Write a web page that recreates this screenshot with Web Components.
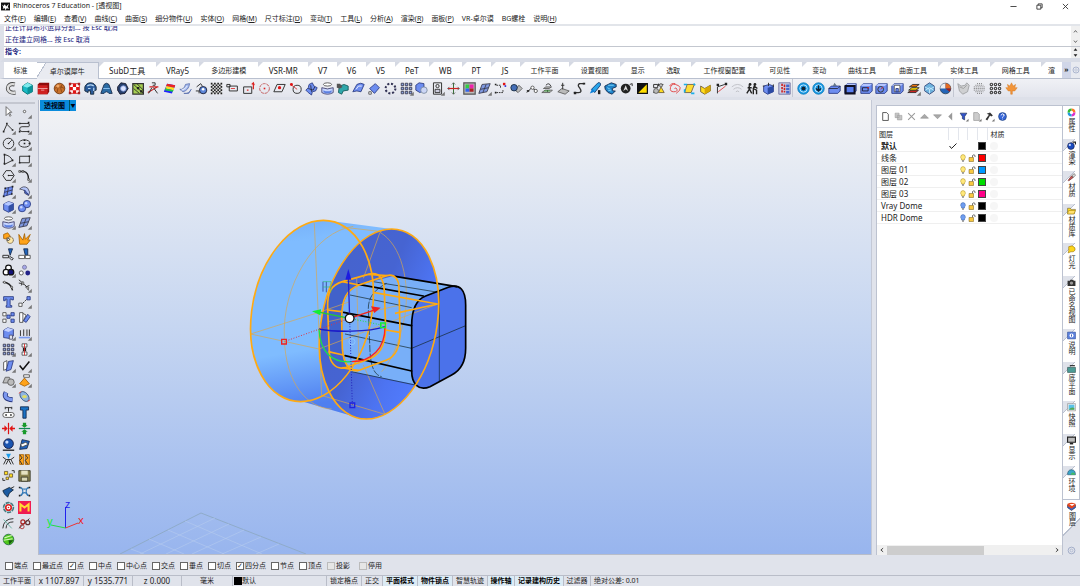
<!DOCTYPE html>
<html lang="zh-CN">
<head>
<meta charset="utf-8">
<title>Rhinoceros 7 Education - [透视图]</title>
<style>
  html, body {
    margin: 0;
    height: 100%;
  }
  body {
    font: 7px/12px "Noto Sans", "Noto Sans CJK SC", sans-serif;
    color: #222;
    background: #e0e3eb;
    overflow: hidden;
  }
</style>
</head>
<body>
<rhino-app>
  <title-bar slot="top">Rhinoceros 7 Education - [透视图]</title-bar>
  <menu-bar slot="top"></menu-bar>
  <command-area slot="top"></command-area>
  <tab-strip slot="top"></tab-strip>
  <icon-toolbar slot="top"></icon-toolbar>
  <side-tools slot="left"></side-tools>
  <view-port slot="view">透视图</view-port>
  <layer-panel slot="right"></layer-panel>
  <panel-tabs slot="right"></panel-tabs>
  <osnap-bar slot="bottom"></osnap-bar>
  <status-bar slot="bottom"></status-bar>
</rhino-app>

<script>
// icons are drawn in a 16x16 box
const gear = '<circle cx="8" cy="8" r="7" fill="#1a9be6" stroke="#0575b5"/><circle cx="8" cy="8" r="4.500" fill="none" stroke="#dff3ff"/>';
const slab = '<path class="b" d="M1 5l3-3h11v9l-3 3H1z"/><path d="M1 5l3-3h11l-3 3z" fill="#b4c5ff"/>';
const ICONS = {
  pipe: '<path d="M12 3C1 0 0 15 13 13" fill="none" stroke="#444" stroke-width="5"/><path d="M12 3C1 0 0 15 13 13" fill="none" stroke="#ddd" stroke-width="3"/>',
  gem: '<path class="c" d="M2 5l6-4 6 3v8l-6 3-6-4z"/><path d="M2 5l6 2 6-3-6-3z" fill="#7fe9ec"/><path d="M8 7l6-3v8l-6 3z" fill="#0a9298"/>',
  redbox: '<path d="M1 3l2-2h12v11l-2 3H1z" fill="#8f0c0c"/><path d="M1 4h12v11H1z" fill="#cf2020"/><path d="M1 8h12M5 10h4" stroke="#f6b0b0"/>',
  ball: '<circle cx="8" cy="8" r="6.500" fill="#c8702a" stroke="#6b3108"/><path d="M2 8q6-4 12 0M5 3q2 5 0 10M11 3q-3 5 0 10" fill="none" stroke="#8a4614"/><circle cx="6" cy="5" r="2" fill="#f0a868"/>',
  redgrid: '<path d="M2 2h12v12H2z" fill="#fff" stroke="#c22"/><path d="M6 2h4v4H6zM2 6h4v4H2zM10 6h4v4h-4zM6 10h4v4H6z" class="r"/><path d="M1 1h3v3H1zM12 1h3v3h-3zM1 12h3v3H1zM12 12h3v3h-3z" fill="#a22"/>',
  bluedome: '<path d="M1 6q2-5 7-5t7 5v4l-3 1v4H8v-4H5v2l-4-2z" fill="#2a5a9a" stroke="#123"/><path d="M4 5q4-3 8 0M5 8h3M12 7v4" fill="none" stroke="#b9d9f5" stroke-width="1.500"/>',
  arch: '<path d="M5 3q3-3 6 0l4 11h-4q-3-4-6 0H1z" fill="#2a6ba4" stroke="#124"/><path d="M4 8h8" stroke="#9cf"/>',
  nut: '<path d="M2 6l4-5 6 1 3 6-4 6-6 1-3-5z" fill="#27406e" stroke="#112"/><circle cx="9" cy="8" r="3.400" fill="#dde4ff" stroke="#7a96d8"/>',
  greengrid: '<path d="M1 2h13v13H1z" fill="#a6cf52" stroke="#333" stroke-width="1.500"/><path d="M2 3l12 11M6 2l8 8M2 8l7 6" stroke="#222"/><path class="k" d="M6 6h3v3H6zM10 10h3v3h-3z"/>',
  cut: '<path d="M1 13L13 6M3 6h11" stroke="#c22" stroke-width="1.300"/><path class="l" d="M8 7l5 7M6 7l-4 7M6 1h4v3H7"/>',
  rainbow: '<path d="M5 2l10 2-4 10L1 12z" fill="#22f"/><path d="M4 5l10 2 1-3-10-2z" fill="#e22"/><path d="M3 8l10 2 1-3-10-2z" fill="#fd2"/><path d="M2 10l10 2 1-2-10-2z" fill="#2c4"/>',
  waves: '<path d="M1 9q5 1 7-6l5-1q-1 8-8 10zM6 14q6 1 9-5l-3 5z" fill="#a9bdf0" stroke="#5a6fae"/><path d="M3 10q5-1 7-5" stroke="#fff" fill="none"/>',
  gearball: '<circle cx="10" cy="10" r="4.500" fill="#5d86d8" stroke="#112"/><path class="l" d="M2 6l5-4 2 3M1 11h4v3"/><circle cx="10" cy="9" r="1.600" fill="#fff"/>',
  checker: '<path d="M1 1h14v14H1z" fill="#ddd"/><path d="M2 1v14M6 1v14M10 1v14M14 1v14" stroke="#222" stroke-width="2" stroke-dasharray="2 2"/><path d="M4 3v12M8 3v12M12 3v12" stroke="#222" stroke-width="2" stroke-dasharray="2 2"/>',
  rectline: '<path class="l" d="M4 5h10v6H4zM1 3h4v3H1z"/><path d="M6 8h5" stroke="#d22"/>',
  rectup: '<path class="l" d="M2 6h10v8H2z"/><path d="M14 9V1M12 3l2-2 1 3M6 10h2" stroke="#d22" fill="none" stroke-width="1.500"/>',
  circdash: '<circle cx="8" cy="8" r="6" fill="none" stroke="#b44" stroke-dasharray="4 1"/><path d="M7 8h2" stroke="#d22" stroke-width="2"/>',
  rhombus: '<path class="l" d="M5 3h10l-4 9H1z"/><circle cx="8" cy="7" r="2" class="r"/>',
  circpt: '<circle class="l" cx="10" cy="9" r="5"/><path d="M2 3l8 6" stroke="#d22"/><circle cx="3" cy="3" r="1.800" class="r"/>',
  cross: '<path class="b" d="M5 3l4-2 2 4 4 2-2 4-4 1-1 4-4-3-3-3 3-3z"/><path d="M4 8l6 2 2-4M7 4l1 8" fill="none" stroke="#223"/>',
  rings: '<ellipse class="w" cx="8" cy="3" rx="5" ry="2"/><path d="M1 7q7 3 14 0v6q-7 4-14 0z" fill="#c7d6ff" stroke="#336"/><path d="M3 10q5 3 10 0v3q-5 2-10 0z" fill="#5c7fe0"/>',
  teal: '<path d="M4 5l6-2 5 2v5l-6 1-2 4-4-2z" fill="#2fa7ab" stroke="#155"/><path d="M1 2h4l3 4-3 2-4-1z" fill="#555"/>',
  sheet: '<path class="b" d="M1 12L6 3q5-3 9 0l-4 9q-5-2-10 0z"/><path d="M5 9l3-4h4" fill="none" stroke="#fff"/>',
  diamond: '<path class="b" d="M2 8l7-6 5 5-6 7z"/><path class="w" d="M1 12h3v3H1z"/>',
  dotring: '<circle cx="8" cy="8" r="6" fill="none" stroke="#335" stroke-width="2.500" stroke-dasharray="2.500 2.200"/>',
  array: '<path d="M1.500 1.500h3v3h-3zM6.500 1.500h3v3h-3zM11.500 1.500h3v3h-3zM1.500 6.500h3v3h-3zM6.500 6.500h3v3h-3zM11.500 6.500h3v3h-3zM1.500 11.500h3v3h-3zM6.500 11.500h3v3h-3zM11.500 11.500h3v3h-3z" fill="#8ea6e6" stroke="#334"/>',
  bool: '<path d="M1 4l4-3 6 1v8l-5 3-5-3z" class="b"/><circle cx="11" cy="10" r="4" fill="#ccd6f6" stroke="#789"/>',
  frame: '<path class="l" d="M3 1h10v14H3z"/><circle class="l" cx="8" cy="5" r="2"/><path d="M5 9h6v4H5z" fill="#ccd" stroke="#222"/>',
  axis: '<path d="M8 1v14" stroke="#151"/><path d="M1 8h14" stroke="#c22" stroke-width="1.500"/><path d="M6 3l2-2 2 2M6 13l2 2 2-2M3 6L1 8l2 2M13 6l2 2-2 2" fill="none" stroke="#555"/>',
  color: '<path d="M1 1h14v14H1z" fill="#bbb" stroke="#555" stroke-width="1.500"/><path d="M3 3h5v5H3z" fill="#3c4"/><path d="M8 3h5v5H8z" fill="#e2a"/><path d="M3 8h5v4H3z" fill="#36e"/><path d="M8 8h5v4H8z" fill="#a22"/>',
  tiles: '<path d="M5 3l10-1-4 10-10 2z" fill="#7f98e0" stroke="#334"/><path d="M3 9l10-2M10 3L6 13" stroke="#334"/>',
  ptsring: '<path class="l" stroke-dasharray="2 1" d="M3 4h5v3M3 13h8V9"/><path class="r" d="M11 1h3v3h-3z"/><path d="M13 4h2v2h-2z" fill="#22d"/><path class="k" d="M1 2h2v2H1zM1 12h2v2H1z"/>',
  twoballs: '<path class="g" d="M6 10l5-6 4 4-5 5z"/><circle cx="5" cy="7" r="4" fill="#456fb8" stroke="#123"/>',
  nodes: '<path class="l" d="M1 13l6-6 6 4"/><path class="k" d="M1 10h3v2H1z"/><circle class="w" cx="8" cy="7" r="2"/><circle class="w" cx="12" cy="11" r="2"/>',
  stack: '<path class="g" d="M1 13l4-3h9l-3 3zM3 8l3-2h7l-3 2z"/><path class="l" d="M6 4q4-4 6 1M8 10v2"/><path d="M4 11h7" stroke="#3a3"/>',
  pin: '<path class="g" d="M1 12l5-4 9 3-5 4z"/><path class="l" d="M7 1v8M5 4h4"/>',
  scurve: '<path d="M14 2H8q-3 2 0 5 4 6-1 6H1" fill="none" stroke="#333" stroke-width="1.600"/><path d="M1 12h3v3H1zM12 1h3v2h-3z" class="k"/>',
  brush: '<path d="M3 9l8-8q4-1 3 3l-7 9z" fill="#28a4ea" stroke="#136"/><path d="M1 14l3-6 3 4z" fill="#0d7fd8"/><path d="M11 10h3v5h-3z" class="k"/>',
  dragon: '<path d="M1 5l8-4 6 2v3l-5 2 1 3h3l-4 4-5-2q-5-4-4-8z" fill="#1f83c9" stroke="#124"/><path d="M4 7l4 2M5 10l4 1M5 4l7 0" stroke="#8df"/>',
  ringk: '<circle cx="7" cy="8" r="6" fill="#222"/><path d="M4 11l3-7 3 7-3-2z" fill="#ddd"/><path d="M12 3l3-1v3" class="l"/>',
  invert: '<path d="M2 2h12v12H2z" fill="#fd0" stroke="#111" stroke-width="1.500"/><path d="M2 14V2h12z" fill="#111"/>',
  mess: '<path class="l" d="M2 3h5v4H2zM9 3h5M4 9l-2 4h5M8 2v3"/><path class="y" d="M11 6l4 7H8z"/><circle class="g" cx="5" cy="11" r="3"/><circle class="g" cx="11" cy="4" r="2"/>',
  spiral: '<path class="rl" d="M8 8q2-2 3 1t-4 3-4-5 6-4 6 4-5 7"/><path class="rl" d="M2 5q2-4 7-3"/>',
  yellow: '<path d="M5 3h9l-4 10H2z" fill="#fd3" stroke="#654"/><path d="M1 3h4M14 14h-4M13 2l2 2M2 9v4" stroke="#18aee8" stroke-width="2"/>',
  ybox: '<path class="y" d="M2 5l5 3 7-4v7l-7 4-5-3z"/><path d="M7 8l7-4v7l-7 4z" fill="#d9a800"/>',
  bend: '<path class="l" d="M3 14V6l9-3"/><path class="rl" d="M4 12l9-7"/><path class="k" d="M2 2h3v3H2zM12 1h3v3h-3z"/>',
  wifi: '<path d="M1 6q7-6 14 0M3 9q5-4 10 0M6 12q2-2 4 0" fill="none" stroke="#b7b9bf"/>',
  people: '<path d="M4 4v5l-3 5M4 8l3 6M2 7h5M11 3l-2 5 4 2v5M10 5l4 3M9 9v6" fill="none" stroke="#222" stroke-width="1.700"/><circle cx="5" cy="3" r="1.700" class="k"/><circle cx="11" cy="3" r="1.700" class="k"/>',
  cube: '<path class="b" d="M2 5l7-2 5 2v7l-7 3-5-3z"/><path d="M7 7l7-2v7l-7 3z" fill="#2b4aa5"/><path d="M8 1v4M1 5h2M14 3v3" class="l"/>',
  circuit: '<path d="M1 1h14v14H1z" fill="#ccd2e8" stroke="#669"/><path d="M5 2v12M8 3v10" stroke="#c22" stroke-width="2" stroke-dasharray="3 1"/><path d="M10 3h4v3h-4zM10 7h4v3h-4zM10 11h4v3h-4z" fill="#46c"/>',
  gear1: gear + '<circle cx="8" cy="8" r="2.500" fill="#123"/>',
  gear2: gear + '<path d="M8 4v6M5 8l3 3 3-3" stroke="#123" fill="none" stroke-width="1.700"/>',
  tray: '<path class="b" d="M1 8l3-3h11v6l-3 3H1z"/><path d="M1 8h11l3-3" fill="none" stroke="#223"/><path d="M8 1l3 4H6z" fill="#678"/>',
  slab1: slab + '<path d="M2 5h11v9H2z" fill="#5a7ff0" stroke="#112" stroke-width="2.500"/>',
  slab2: slab + '<path d="M3 11V7h7v4z" fill="none" stroke="#112"/><circle cx="10" cy="7" r="1" class="r"/>',
  slab3: slab + '<circle class="l" cx="7" cy="9" r="3.500"/><path class="rl" d="M7 9l3-3"/>',
  slab4: slab + '<path class="w" d="M4 4h7v8H4z"/><path class="b" d="M6 8h3v4H6z"/>',
  layers: '<path d="M1 13l4-3h9l-3 3z" fill="#c22" stroke="#222"/><path d="M2 10l4-3h9l-4 3z" fill="#fd0" stroke="#222"/><path d="M3 6l4-3h8l-4 3z" fill="#e71" stroke="#222"/>',
  hexa: '<path d="M8 1l6 4v6l-6 4-6-4V5z" fill="#6eb2dd" stroke="#347"/><path d="M2 6l6 3 6-3M8 9v5M3 10l5-3 5 3" fill="none" stroke="#cef"/>',
  sphere4: '<circle cx="8" cy="8" r="6.500" fill="#2465b8" stroke="#345"/><path d="M8 8V1.500A6.500 6.500 0 0 0 1.500 8z" fill="#eee"/><path d="M8 8h6.500A6.500 6.500 0 0 0 8 1.500z" fill="#e66a20"/><path d="M8 8l5 4a6.500 6.500 0 0 0 1.500-4z" fill="#922"/>',
  ghost: '<path d="M1 2l4 3 5-1 2-3 3 3-2 8-6 3-4-4z" fill="#cfd0d2" stroke="#9a9b9e"/><path d="M3 6l5 2 4-4" stroke="#999" fill="none"/>',
  halftone: '<g fill="none" stroke="#777" stroke-width="1.200" stroke-dasharray="1.200 1.200"><path d="M5 2h6M3 4h10M1 6h14M1 8h14M1 10h14M3 12h10M5 14h6"/></g>',
  ringgrid: '<g fill="none" stroke="#444" stroke-width="1.400"><circle cx="3" cy="3" r="1.500"/><circle cx="8" cy="3" r="1.500"/><circle cx="13" cy="3" r="1.500"/><circle cx="3" cy="8" r="1.500"/><circle cx="8" cy="8" r="1.500"/><circle cx="13" cy="8" r="1.500"/><circle cx="3" cy="13" r="1.500"/><circle cx="8" cy="13" r="1.500"/><circle cx="13" cy="13" r="1.500"/></g>',
  leaf: '<path d="M8 1l2 4 3-2-1 4 3 0-3 4-3 0v4H7v-4l-3 0-3-4h3L3 3l3 2z" fill="#f2953a" stroke="#d57a22" stroke-width=".6"/>',

  arrow: '<path d="M5 2v11l3-3 2 4 1-1-2-4h3z" fill="#fff" stroke="#555"/>',
  point: '<circle cx="8" cy="8" r="1.500" class="w"/>',
  polyline: '<path class="l" d="M2 13l4-9 7 7"/><path class="k" d="M5 2h2v2H5zM1 12h2v2H1zM12 10h2v2h-2z"/>',
  curvebox: '<path class="l" d="M2 3h9q3-1 3 2t-3 2H5q-3 0-3 3t3 3h8"/><path class="k" d="M1 2h2v2H1zM12 1h2v2h-2zM1 12h2v2H1zM12 12h2v2h-2z"/>',
  circle: '<circle class="l" cx="8" cy="8" r="6.500"/><path class="l" d="M8 8l4-4"/><circle cx="8" cy="8" r="1" class="k"/>',
  ellipse: '<ellipse class="l" cx="8" cy="8" rx="7" ry="4.500"/><path class="k" d="M7 7h2v2H7zM13 7h2v2h-2zM7 3h2v2H7z"/>',
  arc: '<path class="l" d="M3 14V2q7 1 10 7z"/><path class="k" d="M2 1h2v2H2zM2 12h2v2H2zM12 8h2v2h-2z"/>',
  rect: '<path class="l" d="M2 4h12v8H2z"/><path class="k" d="M1 11h2v2H1zM13 3h2v2h-2z"/>',
  polygon: '<path class="l" d="M5 2h6l4 6-4 6H5L1 8z"/><path class="l" d="M8 8h6"/><circle cx="8" cy="8" r="1" class="k"/>',
  fillet: '<path d="M2 3h5q6 1 6 10" fill="none" stroke="#222" stroke-width="1.700"/><path class="w" d="M1 2h2v2H1zM5 2h2v2H5zM12 12h2v2h-2z"/>',
  surf: '<path class="b" d="M4 4l9-2-1 9-10 3z"/><path d="M3 9l10-3M8 3L6 13" stroke="#334"/><path class="k" d="M3 3h2v2H3zM12 1h2v2h-2zM1 13h2v2H1zM11 10h2v2h-2z"/>',
  fan: '<path d="M2 5q5-5 10-1 4 5 1 9l-5-3q2-4-6-5z" fill="#b6c7fa" stroke="#445"/><path class="b" d="M8 6l5 6-4-2z"/>',
  box: '<path class="b" d="M2 5l6-3 6 2v8l-6 3-6-3z"/><path d="M8 7l6-3v8l-6 3z" fill="#3350a5"/><path d="M2 5l6-3 6 2-6 3z" fill="#b5c8ff"/>',
  balls: '<circle class="b" cx="5" cy="10" r="4.500"/><circle class="b" cx="11" cy="5" r="4.500"/><circle cx="10" cy="4" r="1.500" fill="#c9d6ff"/><circle cx="4" cy="9" r="1.500" fill="#c9d6ff"/>',
  gearO: '<path class="o" d="M2 3l5-2 3 4-2 4-6-1z"/><circle cx="10" cy="10" r="4" fill="#ffe9a8" stroke="#543" stroke-dasharray="2 .6"/><path class="w" d="M6 7l4 2-3 2z"/>',
  burst: '<path class="o" d="M2 15L1 3l5 7 2-8 1 7 6-6-3 7 3 0-4 5z"/>',
  trim: '<path d="M8 1l2 8 3-8z" fill="#26b" stroke="#124"/><path class="l" d="M1 9h7v3H1zM9 10l5 3-2 2-4-4"/>',
  split: '<path d="M7 1h5v8H9z" fill="#26b" stroke="#124"/><path class="w" d="M1 9h7v4H1zM9 9h6v4H9z"/>',
  group: '<circle cx="8" cy="5" r="3.500" fill="#fff" stroke="#111" stroke-width="1.500"/><circle cx="5" cy="10" r="3.500" fill="#fff" stroke="#111" stroke-width="1.500"/><circle cx="11" cy="10" r="3.500" fill="#117" stroke="#111" stroke-width="1.500"/>',
  ungroup: '<circle cx="8" cy="4" r="2.500" fill="#a5a7e8" stroke="#779"/><circle class="w" cx="4" cy="11" r="2.500"/><circle cx="12" cy="11" r="3" fill="#228"/>',
  handle: '<path d="M1 4q10 0 12 10" fill="none" stroke="#222" stroke-width="1.700"/><circle class="w" cx="3" cy="4" r="1.200"/><circle class="w" cx="12" cy="10" r="1.200"/>',
  handle2: '<path class="l" d="M1 1l5 4M1 5q9 0 12 9M6 3l-2 5M9 10l5-2"/><circle class="w" cx="6" cy="5" r="1.300"/><circle class="w" cx="12" cy="11" r="1.300"/>',
  text: '<path class="b" d="M2 2h12v4h-2V5h-2v8h2v2H5v-2h1V5H4v2H2z"/>',
  move: '<path class="l" stroke-dasharray="2 1" d="M4 12l8-8"/><path class="w" d="M1 10h4v4H1z"/><path class="b" d="M11 2h4v4h-4z"/>',
  copies: '<path class="b" d="M6 5h4v4H6zM11 2h4v4h-4zM11 10h4v4h-4z"/><path class="w" d="M1 2h4v4H1zM1 10h4v4H1z"/>',
  skew: '<path class="w" d="M2 2h4v12H2zM6 3l4 2-4 8"/><path class="b" d="M12 4l3 3-5 7-3-2z"/>',
  capbox: '<path class="b" d="M2 4l5-3 7 2v8l-5 3-7-1z"/><path d="M2 4l5-3 7 2-6 3z" fill="#c3d0ff"/><path d="M9 10h4v5H9z" fill="#e0e3eb" stroke="#446"/>',
  plow: '<path class="l" d="M3 11V4M7 11V3M11 11V3M14 11V3"/><path d="M1 13h14" stroke="#7a9bf0" stroke-width="2"/>',
  align: '<path class="w" d="M5 1h6v4H5zM5 11h6v4H5z"/><path class="k" d="M6 6h4v4H6z"/><path d="M8 1v14" stroke="#d22"/>',
  flag: '<path class="w" d="M2 4l4-2v10l-4 2z"/><path class="b" d="M8 3l6-1-3 11-6 2z"/>',
  check: '<path d="M2 8l4 5 8-10" fill="none" stroke="#111" stroke-width="1.800"/>',
  solids: '<path class="g" d="M1 11l3-7h5l3 7z"/><circle class="g" cx="11" cy="10" r="4"/>',
  orangepyr: '<path class="o" d="M2 12l6-7 6 7-6 3z"/><path class="w" d="M7 1h7v3H7z"/>',
  elbow: '<path d="M5 3q-4 8 8 9" fill="none" stroke="#25357c" stroke-width="6"/><path d="M5 3q-4 8 8 9" fill="none" stroke="#7c98ee" stroke-width="4"/>',
  eye: '<ellipse cx="8" cy="8" rx="7" ry="4.500" transform="rotate(50 8 8)" fill="#8fb4e0" stroke="#357"/><ellipse cx="8" cy="8" rx="3" ry="2" fill="#dd6"/><path class="rl" d="M1 4l3-2M12 14l3-2"/>',
  belt: '<path class="l" d="M4 2h8M8 2v5M4 1v3M12 1v3"/><rect class="w" x="1" y="8" width="14" height="6" rx="3"/><path class="k" d="M4 10h2v2H4zM10 10h2v2h-2z"/>',
  bolt: '<path d="M3 1h10v4h-3v10H6V5H3z" fill="#1b72c4" stroke="#124"/>',
  inward: '<path d="M8 1v14" stroke="#d11" stroke-width="1.500"/><path class="r" d="M0 7h3V4l4 4-4 4V9H0zM16 7h-3V4L9 8l4 4V9h3z"/>',
  inwardv: '<path d="M1 8h14" stroke="#185" stroke-width="1.500"/><path d="M6 1v3H4l4 3 4-3h-2V1zM6 15v-3H4l4-3 4 3h-2v3z" fill="#1a9a2c"/>',
  render: '<circle cx="8" cy="7" r="6" fill="#1b55b0" stroke="#113"/><circle cx="6" cy="5" r="2" fill="#cdf"/><path d="M1 15h14" stroke="#111" stroke-width="1.500"/>',
  fold: '<path d="M5 2l9 2-3 9-9 1z" fill="#1f62bd" stroke="#124"/><path class="w" d="M3 8l7-3 2 3-7 3z"/>',
  mirror: '<path class="l" stroke-width="2" d="M1 5l4 3-3 6M15 5l-4 3 3 6M8 8l-3 6M8 8l3 6M5 8h6"/><path d="M5 1h6L8 7z" fill="#1a9bea"/>',
  coil: '<path d="M2 2h5v12H2zM9 2h5v12H9z" class="o"/><path class="l" stroke-width="2" d="M2 2l3 4-3 3 3 5M9 2l3 4-3 3 3 5"/>',
  puzzle: '<path class="y" d="M3 3h4v4H3zM9 6h4v4H9zM5 10h3v3H5z"/><path class="l" d="M1 11v3h3M12 2h3v3"/>',
  disk: '<path d="M1 2h14v13H1z" fill="#8a8350" stroke="#332"/><path d="M4 2h8v5H4z" fill="#e5e2c2"/><path d="M4 10h8v5H4z" fill="#d9d7b5" stroke="#332"/>',
  bird: '<path d="M1 7l8-4 5 3-5 4-2 5-4-4z" fill="#1c5ba2" stroke="#123"/><path class="l" d="M11 4l4-2"/>',
  net: '<path d="M2 3q6 4 12 0M3 13q5-7 10 0M4 3q4 5 0 10M12 3q-4 5 0 10" fill="none" stroke="#347ab8" stroke-width="1.500"/><path class="k" d="M1 2h2v2H1zM13 2h2v2h-2zM1 12h2v2H1zM13 12h2v2h-2z"/>',
  target: '<circle cx="8" cy="8" r="6" fill="#dff" stroke="#467a80" stroke-width="2" stroke-dasharray="5 1"/><circle cx="8" cy="8" r="3.400" fill="#fff" stroke="#d22" stroke-width="2"/><circle cx="8" cy="8" r="1" class="r"/>',
  m: '<path d="M0 0h16v16H0z" fill="#f01c50"/><path d="M3 13V4l5 4 5-4v9" fill="none" stroke="#fd3" stroke-width="2.500"/>',
  offset: '<path class="l" d="M1 14Q2 2 14 2M5 14Q5 6 14 6"/><path d="M2 3l10 11" stroke="#5a9"/>',
  chain: '<path class="l" d="M1 14L14 2"/><circle cx="6" cy="6" r="2.500" fill="none" stroke="#a22" stroke-width="1.500"/><circle cx="12" cy="7" r="2.500" fill="none" stroke="#633" stroke-width="1.500"/><circle cx="5" cy="12" r="2.500" fill="none" stroke="#a22"/>',
  green: '<circle cx="8" cy="8" r="6.500" fill="#4fc71c" stroke="#264"/><path d="M3 6l9-3M2 9l11-2" stroke="#d3f7b8" stroke-width="1.300"/><path fill="#175a10" d="M8 9l6 0-5 5z"/>',

  page: '<path class="w" stroke-width="1.500" d="M3 1h7l3 3v11H3z"/>',
  pages: '<path d="M2 2h7v8H2zM6 6h8v8H6z" fill="#c5c5c5" stroke="#999"/>',
  x: '<path d="M2 2l12 12M14 2L2 14" stroke="#999" stroke-width="1.800"/>',
  up: '<path d="M1 11l7-7 7 7z" fill="#aaa" stroke="#888"/>',
  down: '<path d="M1 5l7 7 7-7z" fill="#aaa" stroke="#888"/>',
  left: '<path d="M11 1L4 8l7 7z" fill="#999"/>',
  spinup: '<path d="M2 12l6-8 6 8z" fill="#222"/>',
  spindown: '<path d="M2 4l6 8 6-8z" fill="#222"/>',
  filter: '<path d="M2 2h12l-4 6v6l-4-2V8z" fill="#3355cc" stroke="#124"/>',
  doc: '<path d="M3 1h7l3 3v11H3z" fill="#ccc" stroke="#888"/>',
  hammer: '<path d="M3 3l6-2 5 5-3 2-2-2-5 9-3-2 6-8z" fill="#333"/>',
  help: '<circle cx="8" cy="8" r="7" fill="#3765d8" stroke="#136"/><path d="M5 6q3-5 6-1 0 2-3 4v1M8 12v1" stroke="#fff" stroke-width="1.700" fill="none"/>',
  bulb: '<path d="M5 10Q2 7 4 3q4-4 8 0 2 4-1 7v2H5z" fill="#ffe87a" stroke="#a98a20"/><path d="M6 13h4v2H6z" fill="#555"/>',
  bulboff: '<path d="M5 10Q2 7 4 3q4-4 8 0 2 4-1 7v2H5z" fill="#6f9df0" stroke="#3761a8"/><path d="M6 13h4v2H6z" fill="#555"/>',
  lock: '<path d="M9 7V3q3-3 5 0v3" fill="none" stroke="#444" stroke-width="1.500"/><path d="M2 7h9v8H2z" fill="#f8c840" stroke="#775a10"/>',
  tick: '<path d="M1 8l4 5L15 3" fill="none" stroke="#222" stroke-width="2"/>',

  wheel: '<g fill="none" stroke-width="4"><path d="M8 3a5 5 0 0 1 5 5" stroke="#f72"/><path d="M13 8a5 5 0 0 1-5 5" stroke="#d3c"/><path d="M8 13a5 5 0 0 1-5-5" stroke="#29d"/><path d="M3 8a5 5 0 0 1 5-5" stroke="#3b3"/></g>',
  bomb: '<circle cx="7" cy="9" r="6" fill="#1a4bc0" stroke="#113"/><circle cx="5" cy="7" r="2" fill="#cdf"/><path d="M10 2h5v4" stroke="#222" fill="none" stroke-width="2"/>',
  paint: '<path d="M2 13l6-8 3 3-8 6z" fill="#c55" stroke="#522"/><path d="M9 4l4-3 2 3-4 4z" fill="#ddd" stroke="#444"/>',
  folder: '<path class="y" d="M1 4h5l1 2h8l-2 8H1z"/><path d="M3 8h12l-3 6H1z" fill="#ffe070" stroke="#a80"/>',
  lamp: '<path d="M3 3q7-4 11 2 2 5-3 7H7l-5 2 1-4z" fill="#fbd51c" stroke="#986f08"/>',
  camera: '<path d="M1 5h4l1-2h5l1 2h3v9H1z" fill="#333"/><circle cx="8" cy="9" r="3" fill="#999"/>',
  info: '<path d="M1 2h14v12H1z" fill="#5d83df" stroke="#24428f"/><circle cx="8" cy="8" r="3.500" fill="#fff"/><path d="M8 6v4" stroke="#24a" stroke-width="1.500"/>',
  ground: '<path d="M1 6h14v9H1z" fill="#4c9c96" stroke="#244"/><path d="M5 3h9" stroke="#222" stroke-width="2"/>',
  photo: '<path d="M1 1h14v13H1z" fill="#eee" stroke="#888"/><path d="M3 3h10v9H3z" fill="#5bc2e8"/><path d="M3 12q5-6 10-3v3z" fill="#5a5"/>',
  monitor: '<path d="M1 2h14v9H1z" fill="#bbb" stroke="#222" stroke-width="2"/><path class="k" d="M5 12h6v3H5z"/>',
  env: '<path d="M1 12Q1 3 8 3t7 9z" fill="#3aa7c9" stroke="#246"/><path d="M7 12q0-6 7-3v3z" fill="#4b6"/>',
  layerp: '<path d="M1 5l7 4 7-4v5l-7 5-7-5z" fill="#36c" stroke="#223"/><path d="M1 3q7-3 14 0v4l-7 5-7-5z" fill="#e6461c"/><path d="M4 4l5 3 5-4z" fill="#fff"/>',
  cog: '<circle cx="8" cy="8" r="6" fill="none" stroke="#9aa6c4" stroke-width="1.500"/><circle cx="8" cy="8" r="2.500" fill="none" stroke="#9aa6c4"/>',
  logo: '<path d="M0 1h16v14H0z" fill="#111"/><path d="M1 4l3 3 3-3 2 4 5-5-2 6 3 3-5-1-2 4-1-4-4 1 1-3z" fill="#fff"/>',
  min: '<path d="M1 8h14" stroke="#333" stroke-width="2"/>',
  restore: '<path d="M2 5h9v9H2zM5 5V2h9v9h-3" fill="none" stroke="#333" stroke-width="2"/>',
  close: '<path d="M2 2l12 12M14 2L2 14" stroke="#333" stroke-width="2"/>',
  chevup: '<path d="M3 11l5-6 5 6" fill="none" stroke="#444" stroke-width="2.500"/>',
  chevdown: '<path d="M3 5l5 6 5-6" fill="none" stroke="#444" stroke-width="2.500"/>',
  chevleft: '<path d="M11 3L5 8l6 5" fill="none" stroke="#444" stroke-width="2.500"/>',
  chevright: '<path d="M5 3l6 5-6 5" fill="none" stroke="#444" stroke-width="2.500"/>'
};

function render(el, html) {
  el.attachShadow({ mode: "open" }).innerHTML = html;
}

const RESET = `
  button, input { font: inherit; color: inherit; margin: 0; padding: 0; border: 0; background: none; }
`;

class ToolIcon extends HTMLElement {
  connectedCallback() {
    if (this.shadowRoot) return;
    const fly = this.hasAttribute("fly") ? '<path d="M17 12v5h-5z" fill="#777"/>' : "";
    render(this, `
      <style>
        :host { display: inline-block; width: 13px; height: 13px; flex: none; }
        svg { display: block; width: 100%; height: 100%; overflow: visible; }
        .l { fill: none; stroke: #333; stroke-width: 1.2; }
        .rl { fill: none; stroke: #e03030; }
        .b { fill: #6d8df0; stroke: #25357c; }
        .c { fill: #18b9c4; stroke: #066; }
        .g { fill: #bbb; stroke: #555; }
        .w { fill: #fff; stroke: #444; }
        .y { fill: #fd2; stroke: #653; }
        .o { fill: #ffa31a; stroke: #a45f00; }
        .r { fill: #e01414; }
        .k { fill: #222; }
      </style>
      <svg viewBox="0 0 16 16" aria-hidden="true">${ICONS[this.getAttribute("name")]}${fly}</svg>`);
  }
}
customElements.define("tool-icon", ToolIcon);

class RhinoApp extends HTMLElement {
  constructor() {
    super();
    render(this, `
      <style>
        :host { display: flex; flex-direction: column; height: 100vh; }
        .main { flex: 1; min-height: 0; display: flex; border-top: 3px solid #dde0e9; }
        .right { display: flex; flex: 0 0 209px; box-sizing: border-box; padding: 5px 0 0 4px; border-left: 1px solid #c4c9d6; }
        slot[name=view]::slotted(*) { flex: 1; min-width: 0; }
      </style>
      <slot name="top"></slot>
      <div class="main">
        <slot name="left"></slot>
        <slot name="view"></slot>
        <div class="right"><slot name="right"></slot></div>
      </div>
      <slot name="bottom"></slot>`);
  }
}
customElements.define("rhino-app", RhinoApp);

class TitleBar extends HTMLElement {
  constructor() {
    super();
    render(this, `
      <style>
        ${RESET}
        :host { display: flex; align-items: center; height: 12px; padding: 0 11px 0 1px; gap: 3px; background: #fff; }
        .title { flex: 1; }
        .win { display: flex; gap: 19px; }
        button { display: flex; }
        tool-icon { width: 9px; height: 9px; }
        .win tool-icon { width: 7px; height: 7px; }
      </style>
      <tool-icon name="logo"></tool-icon>
      <span class="title"><slot></slot></span>
      <div class="win">
        <button aria-label="最小化"><tool-icon name="min"></tool-icon></button>
        <button aria-label="还原"><tool-icon name="restore"></tool-icon></button>
        <button aria-label="关闭"><tool-icon name="close"></tool-icon></button>
      </div>`);
  }
}
customElements.define("title-bar", TitleBar);

class MenuBar extends HTMLElement {
  constructor() {
    super();
    const items = ["文件F", "编辑E", "查看V", "曲线C", "曲面S", "细分物件U", "实体O", "网格M", "尺寸标注D",
      "变动T", "工具L", "分析A", "渲染R", "面板P", "VR-卓尔谟", "BG螺栓", "说明H"];
    render(this, `
      <style>
        ${RESET}
        :host { display: flex; gap: 8px; height: 12px; padding-left: 4px; background: #fff; border-bottom: 2px solid #e2e5ea; }
        button { white-space: nowrap; line-height: 14px; height: 14px; }
      </style>
      ${items.map(t => `<button>${t.replace(/([A-Z])$/, "(<u>$1</u>)")}</button>`).join("")}`);
  }
}
customElements.define("menu-bar", MenuBar);

class CommandArea extends HTMLElement {
  constructor() {
    super();
    render(this, `
      <style>
        ${RESET}
        :host { display: flex; flex-direction: column; background: #fff; color: #1a237e; border-left: 4px solid #dde0e9; border-bottom: 4px solid #d8dce6; }
        .row { display: flex; }
        .history { flex: 1; height: 20px; overflow: hidden; display: flex; flex-direction: column; justify-content: flex-end; padding-left: 1px; }
        .history p { margin: 0; flex: none; }
        .prompt { border-top: 1px solid #c3c7cf; height: 11px; padding-left: 1px; }
        label { font-weight: bold; line-height: 10px; }
        input { flex: 1; outline: none; }
        .btns { width: 9px; display: flex; flex-direction: column; justify-content: space-around; align-items: center; background: #f0f0f0; }
        .btns button { display: flex; }
        .btns tool-icon { width: 5px; height: 5px; }
      </style>
      <div class="row">
        <div class="history"><p>正在计算布尔运算分割... 按 Esc 取消</p><p>正在建立网格... 按 Esc 取消</p></div>
        <div class="btns">
          <button aria-label="向上"><tool-icon name="chevup"></tool-icon></button>
          <button aria-label="向下"><tool-icon name="chevdown"></tool-icon></button>
        </div>
      </div>
      <div class="row prompt">
        <label for="cmd">指令:</label><input id="cmd">
        <div class="btns">
          <button aria-label="上一个"><tool-icon name="spinup"></tool-icon></button>
          <button aria-label="下一个"><tool-icon name="spindown"></tool-icon></button>
        </div>
      </div>`);
  }
}
customElements.define("command-area", CommandArea);

class TabStrip extends HTMLElement {
  constructor() {
    super();
    // label, share of the strip's width
    const tabs = [["标准", 33], ["卓尔谟犀牛", 61], ["SubD工具", 57], ["VRay5", 44], ["多边形建模", 59],
      ["VSR-MR", 50], ["V7", 29], ["V6", 29], ["V5", 29], ["PeT", 34], ["WB", 33], ["PT", 29], ["JS", 29],
      ["工作平面", 50], ["设置视图", 51], ["显示", 35], ["选取", 36], ["工作视窗配置", 67], ["可见性", 44],
      ["变动", 35], ["曲线工具", 51], ["曲面工具", 51], ["实体工具", 52], ["网格工具", 51], ["渲", 21]];
    render(this, `
      <style>
        ${RESET}
        :host { display: flex; height: 16px; border-left: 4px solid #dde0e9; border-bottom: 1px solid #b9c0cf; background: #fff; }
        .tabs { flex: 1; min-width: 0; display: flex; }
        .tabs button { flex-basis: 0; min-width: 0; white-space: nowrap; line-height: 18px;
          background: linear-gradient(135deg, #d5d9e3 3px, #fff 4px); }
        .tabs button.latin { font-size: 8px; }
        .tabs button:first-child { background: #fff; }
        .tabs button.on { margin-bottom: -1px; line-height: 17px; background: linear-gradient(122deg, #fff 7px, #b9c0cf 7px, #b9c0cf 8px, #e9ebf1 8px);
          border-right: 1px solid #b9c0cf; border-top: 1px solid #b9c0cf; }
        .more { width: 9px; background: #d0d6e8; font-weight: bold; }
        .opt { width: 9px; display: flex; align-items: center; justify-content: center; background: #e8eaf0; }
        .opt tool-icon { width: 8px; height: 8px; }
      </style>
      <div class="tabs" role="tablist">
        ${tabs.map(([t, w], i) => `<button role="tab" class="${i == 1 ? "on" : ""} ${/^[A-Z]/.test(t) ? "latin" : ""}" style="flex-grow:${w}">${t}</button>`).join("")}
      </div>
      <button class="more">»</button>
      <button class="opt" aria-label="选项"><tool-icon name="cog"></tool-icon></button>`);
  }
}
customElements.define("tab-strip", TabStrip);

// a trailing * marks a button with a fly-out
function toolButton(n) {
  const name = n.replace("*", "");
  return `<button aria-label="${name}"><tool-icon name="${name}" ${n != name ? "fly" : ""}></tool-icon></button>`;
}

class IconToolbar extends HTMLElement {
  constructor() {
    super();
    const groups = [
      "pipe gem redbox ball redgrid bluedome arch nut greengrid cut rainbow waves gearball checker rectline rectup circdash rhombus circpt cross rings teal sheet diamond dotring array* bool frame* axis color tiles* ptsring twoballs nodes stack pin scurve brush dragon ringk invert mess spiral yellow ybox bend wifi people cube circuit",
      "gear1 gear2 tray slab1 slab2 slab3 slab4 layers* hexa sphere4",
      "ghost halftone ringgrid leaf"
    ].map(g => g.split(" "));
    render(this, `
      <style>
        ${RESET}
        :host { display: flex; height: 18px; padding: 0 61px 0 4px; background: linear-gradient(#f0f1f5, #e2e4ec); }
        div { display: flex; flex-basis: 0; }
        div + div { border-left: 1px solid #c3c7d2; padding-left: 2px; }
        button { flex: 1 1 0; display: flex; align-items: center; justify-content: center; }
      </style>
      ${groups.map(g => `<div style="flex-grow:${g.length}">${g.map(toolButton).join("")}</div>`).join("")}`);
  }
}
customElements.define("icon-toolbar", IconToolbar);

class SideTools extends HTMLElement {
  constructor() {
    super();
    const tools = ("arrow point* polyline* curvebox* circle* ellipse* arc* rect* polygon* fillet* surf* fan* box* balls* " +
      "rings* tiles* gearO burst trim split group* ungroup handle handle2* text move* copies skew capbox* plow* " +
      "array* align* flag* check* solids* orangepyr* elbow eye belt bolt inward inwardv render fold mirror coil " +
      "puzzle disk bird net target m offset chain green").split(" ");
    render(this, `
      <style>
        ${RESET}
        :host { display: flex; flex: 0 0 39px; border-right: 1px solid #b7bccb; box-sizing: border-box; padding-bottom: 8px; background: #e0e3eb; }
        .grid { display: grid; grid-template-columns: 16px 16px; grid-auto-rows: 1fr; flex: 1; border-top: 2px solid #c4c7d0; margin: 2px 3px 0 0; }
        button { display: flex; align-items: center; justify-content: center; min-height: 0; }
      </style>
      <div class="grid">${tools.map(toolButton).join("")}</div>`);
  }
}
customElements.define("side-tools", SideTools);

class ViewPort extends HTMLElement {
  constructor() {
    super();
    render(this, `
      <style>
        ${RESET}
        :host { display: block; position: relative; overflow: hidden; background: linear-gradient(#f3f3f4, #c6d6f1 50%, #98b5ee); border-bottom: 1px solid #b8bdc9; }
        svg { display: block; width: 100%; height: 100%; }
        .name { position: absolute; left: 1px; top: 0; display: flex; background: #0a8cdc; color: #001; line-height: 11px; }
        .name b { padding: 0 4px; }
        .name button { border-left: 1px solid #056; width: 7px; line-height: 11px; font-size: 5px; }
        .t { fill: none; stroke: #d9a84e; stroke-width: 2; }
        .o { fill: none; stroke: #ffaa12; stroke-width: 5; }
        .k { fill: none; stroke: #000; stroke-width: 5; stroke-linecap: round; }
        .kt { fill: none; stroke: #122; stroke-width: 2; }
      </style>
      <svg viewBox="39 100 832 454" preserveAspectRatio="xMidYMid slice">
        <defs>
          <linearGradient id="out" x1="0" y1="0" x2=".15" y2="1">
            <stop offset="0" stop-color="#73acf6"/><stop offset=".15" stop-color="#7fbcff"/>
            <stop offset=".68" stop-color="#7fbcff"/><stop offset=".95" stop-color="#4f7ff0"/>
          </linearGradient>
          <linearGradient id="in" x1="0" y1=".2" x2="1" y2=".7">
            <stop offset="0" stop-color="#4663cc"/><stop offset=".45" stop-color="#4664d2"/>
            <stop offset=".75" stop-color="#4d74f2"/><stop offset="1" stop-color="#527dff"/>
          </linearGradient>
          <clipPath id="tube">
            <path d="M265 45L470 72L540 300L375 640L205 590L90 500V180Z"/>
            <ellipse rx="181" ry="272" transform="translate(231 318) skewX(-7.100)"/>
          </clipPath>
        </defs>
        <g fill="none" stroke="#b6cbee">
          <path d="M120 554L201 513L306 554" stroke="#8fabc9"/>
          <path d="M185 521L262 554M168 530L224 554M149 539L184 554M131 549L144 554M215 518L140 554M229 524L166 554M244 530L192 554M261 537L222 554M279 544L256 554" stroke-width=".6"/>
        </g>
        <g fill="none">
          <path d="M65.500 528V507" stroke="#22e"/><path d="M65.500 528L78 523" stroke="#e33"/><path d="M65.500 528L51 525" stroke="#2d4"/>
        </g>
        <g font-size="11">
          <text x="65" y="508" fill="#22e">z</text><text x="78" y="524" fill="#e22">x</text><text x="47" y="525" fill="#1e3">y</text>
        </g>

        <!-- tube and box, drawn at three units to the pixel -->
        <g transform="translate(235 205) scale(.33333)">
          <path d="M40 40H560V650H40Z" fill="url(#out)" clip-path="url(#tube)"/>
          <ellipse rx="175" ry="285" transform="translate(432 357) skewX(-7.600)" fill="url(#in)"/>
          <path d="M322 320C324 270 340 250 372 240L475 213L665 245L600 330L530 498L540 538L350 500C330 480 322 440 322 410Z" fill="#78aff8"/>
          <path d="M530 362C530 320 540 285 572 273L640 247C675 235 692 255 692 300V430C692 470 680 495 650 510L585 545C550 560 530 535 530 498Z" fill="#4b72ea"/>
          <path d="M278 310C276 260 290 240 322 230L372 240Q325 260 320 330L325 460L340 490Q285 490 283 440Z" fill="#4161ca"/>
          <g class="t">
            <path d="M238 55L260 572M47 387L252 322L345 290M47 387L252 432M355 64C240 80 140 240 148 400C152 540 220 610 290 612M320 66L440 80M435 82L385 220M435 82C500 120 525 230 510 330C490 440 450 490 440 500M252 432L608 297M262 572L450 628M385 480L450 628M365 220L372 480M280 350L495 300"/>
          </g>
          <g class="kt">
            <path d="M530 430L692 362M613 258V530M330 387L530 430M345 270L530 308M415 230L610 262M350 500L540 540"/>
            <path d="M455 235C415 255 400 280 400 310L405 440C408 490 420 510 440 515" stroke-dasharray="22 4"/>
          </g>
          <g class="k">
            <path d="M480 214L665 245M370 238L565 273M326 322L530 362M330 452L530 498"/>
            <path d="M530 362C530 320 540 285 572 273L640 247C675 235 692 255 692 300V430C692 470 680 495 650 510L585 545C550 560 530 535 530 498Z"/>
          </g>
          <g class="o">
            <ellipse rx="181" ry="272" transform="translate(231 318) skewX(-7.100)"/>
            <ellipse rx="175" ry="285" transform="translate(432 357) skewX(-7.600)"/>
            <path d="M278 310C276 260 290 240 322 230L400 208C435 198 447 225 448 260L452 370C450 430 430 450 400 463L330 488C300 495 283 470 283 440Z"/>
            <path d="M320 340C320 280 335 255 372 240L455 212C480 205 492 225 492 250L495 380C495 430 480 455 455 465L375 495C340 505 325 470 322 430Z"/>
            <path d="M608 297L415 262M608 297L480 325M322 230L372 240M400 208L455 212M280 440L325 450M278 315L320 320M452 375L495 382M322 488L370 497"/>
          </g>
          <g fill="none" stroke-width="4">
            <path d="M252 372C300 382 400 382 450 365" stroke="#1c1cc8"/>
            <path d="M252 372C255 440 290 475 350 470" stroke="#1be04a"/>
            <path d="M450 365C450 430 410 470 350 470" stroke="#ff2020"/>
            <path d="M344 340L340 215" stroke="#22c"/><path d="M344 340L415 316" stroke="#e22"/><path d="M344 340L255 322" stroke="#2c3"/>
            <path d="M264 230V260M274 230V262" stroke="#227" stroke-width="2"/>
            <path d="M264 230h24v32M264 246h24" stroke="#3b7" stroke-width="2"/>
            <path d="M344 340L147 410" stroke="#d34" stroke-width="3" stroke-dasharray="3 5"/>
            <path d="M344 340L352 600" stroke="#22b" stroke-width="3" stroke-dasharray="3 5"/>
            <path d="M344 340L444 361" stroke="#2d4" stroke-width="3" stroke-dasharray="3 5"/>
            <path d="M140 403h14v14h-14z" stroke="#e22"/><path d="M345 594h14v14h-14z" stroke="#22d"/>
            <path d="M437 354h14v14h-14z" stroke="#1e3"/><circle cx="351" cy="410" r="9" stroke="#8cc4ff" stroke-width="3"/>
          </g>
          <path d="M340 192L349 224H331Z" fill="#1c1ce0"/>
          <path d="M437 308L408 304L418 324Z" fill="#e22"/>
          <path d="M231 319L258 313L256 331Z" fill="#1e3"/>
          <circle cx="344" cy="340" r="13" fill="#fff" stroke="#111" stroke-width="4"/>
        </g>
      </svg>
      <div class="name"><b><slot></slot></b><button aria-label="视图菜单">▼</button></div>`);
  }
}
customElements.define("view-port", ViewPort);

class LayerPanel extends HTMLElement {
  constructor() {
    super();
    const layers = [["默认", "#000"], ["线条", "#f00", "bulb"], ["图层 01", "#09f", "bulb"], ["图层 02", "#0d0", "bulb"],
      ["图层 03", "#f08", "bulb"], ["Vray Dome", "#000", "bulboff"], ["HDR Dome", "#000", "bulboff"]];
    const row = ([name, color, bulb]) => `
      <tr class="${bulb ? "" : "cur"}">
        <td>${name}</td>
        <td>${bulb ? "" : '<tool-icon name="tick"></tool-icon>'}</td>
        <td>${bulb ? `<tool-icon name="${bulb}"></tool-icon>` : ""}</td>
        <td>${bulb ? '<tool-icon name="lock"></tool-icon>' : ""}</td>
        <td><i style="background:${color}"></i></td>
        <td><i class="mat"></i></td>
      </tr>`;
    render(this, `
      <style>
        ${RESET}
        :host { display: flex; flex-direction: column; flex: 1; min-width: 0; background: #fff; border: 1px solid #bcc2d0; border-bottom: 0; }
        .tools { display: flex; align-items: center; gap: 4px; height: 21px; padding-left: 4px; border-bottom: 1px solid #d5d9e3; }
        .tools button { display: flex; }
        .tools tool-icon { width: 9px; height: 9px; }
        table { width: 100%; border-collapse: collapse; table-layout: fixed; }
        th, td { padding: 0; height: 11px; line-height: 11px; border-bottom: 1px solid #efefef; font-weight: normal; text-align: left; }
        th { border-right: 1px solid #e3e6ec; border-bottom: 0; height: 12px; padding-left: 2px; }
        th:last-child { border-right: 0; padding-left: 3px; }
        td:first-child { padding-left: 4px; font-size: 8px; }
        .cur td:first-child { font-weight: bold; }
        td tool-icon { display: block; width: 8px; height: 8px; margin: auto; }
        i { display: block; width: 6px; height: 6px; border: 1px solid #444; margin: auto; }
        .mat { border: 0; border-radius: 50%; width: 8px; height: 8px; background: #f6f6f6; margin: 0 3px; }
        .fill { flex: 1; }
        .scroll { display: flex; align-items: center; height: 10px; background: #f0f0f0; padding: 0 2px; gap: 2px; }
        .scroll button { display: flex; }
        .scroll tool-icon { width: 6px; height: 6px; }
        .track { flex: 1; height: 9px; display: flex; }
        .thumb { width: 59%; background: #cdcdcd; }
      </style>
      <div class="tools">${["page", "pages", "x", "up", "down", "left", "filter*", "doc*", "hammer*", "help"].map(toolButton).join("")}</div>
      <table>
        <colgroup><col style="width:71px"><col style="width:10px"><col style="width:9px"><col style="width:10px"><col style="width:10px"><col></colgroup>
        <thead><tr><th>图层</th><th></th><th></th><th></th><th></th><th>材质</th></tr></thead>
        <tbody>${layers.map(row).join("")}</tbody>
      </table>
      <div class="fill"></div>
      <div class="scroll">
        <button aria-label="向左"><tool-icon name="chevleft"></tool-icon></button>
        <div class="track"><div class="thumb"></div></div>
        <button aria-label="向右"><tool-icon name="chevright"></tool-icon></button>
      </div>`);
  }
}
customElements.define("layer-panel", LayerPanel);

class PanelTabs extends HTMLElement {
  constructor() {
    super();
    const tabs = [["wheel", "属性"], ["bomb", "渲染"], ["paint", "材质"], ["folder", "材质库"], ["lamp", "灯光"],
      ["camera", "已命名视图"], ["info", "说明"], ["ground", "底平面"], ["photo", "快照"], ["monitor", "显示"],
      ["env", "环境"], ["layerp", "图层"]];
    render(this, `
      <style>
        ${RESET}
        :host { display: flex; flex-direction: column; width: 17px; }
        .tab { display: flex; flex-direction: column; align-items: center; gap: 1px; padding: 2px 0 7px;
          background: linear-gradient(135deg, #dfe2ea 8px, #b9c0cf 8px, #b9c0cf 9px, #fff 9px); border-right: 1px solid #b9c0cf; }
        .tab:nth-of-type(even) { padding-bottom: 6px; }
        .tab:first-of-type { background: #fff; border-top: 1px solid #b9c0cf; }
        .tab:last-of-type { padding-bottom: 16px; background: linear-gradient(315deg, #dfe2ea 16px, #b9c0cf 16px, #b9c0cf 17px, #fff 17px); border-top: 1px solid #b9c0cf; border-right: 0; }
        span { writing-mode: vertical-rl; line-height: 10px; }
        tool-icon { width: 9px; height: 9px; }
        .opt { display: flex; justify-content: center; margin-top: auto; }
      </style>
      ${tabs.map(([i, t]) => `<button class="tab"><tool-icon name="${i}"></tool-icon><span>${t}</span></button>`).join("")}
      <div class="opt"><tool-icon name="cog"></tool-icon></div>`);
  }
}
customElements.define("panel-tabs", PanelTabs);

class OsnapBar extends HTMLElement {
  constructor() {
    super();
    const snaps = ["端点", "最近点", "点*", "中点", "中心点", "交点", "垂点", "切点", "四分点*", "节点", "顶点"];
    const box = t => `<label><input type="checkbox" ${t.endsWith("*") ? "checked" : ""}>${t.replace("*", "")}</label>`;
    render(this, `
      <style>
        ${RESET}
        :host { display: flex; align-items: center; gap: 5px; height: 18px; padding: 2px 0 0 5px; background: #e0e3eb; }
        label { display: flex; align-items: center; gap: 1px; white-space: nowrap; }
        input { appearance: none; width: 8px; height: 8px; box-sizing: border-box; border: 1px solid #666; background: #fff; }
        input:checked::after { content: "✓"; display: block; font: 7px/6px "DejaVu Sans", sans-serif; }
        .off input { border-color: #bbb; background: #e6e6e6; }
        .last { margin-left: 4px; }
      </style>
      ${snaps.map(box).join("")}
      <label class="off"><input type="checkbox" disabled>投影</label>
      <label class="off last"><input type="checkbox" disabled>停用</label>`);
  }
}
customElements.define("osnap-bar", OsnapBar);

class StatusBar extends HTMLElement {
  constructor() {
    super();
    render(this, `
      <style>
        ${RESET}
        :host { display: flex; height: 10px; border-top: 1px solid #b9bdc8; background: #e0e3eb; }
        button, span { flex: none; box-sizing: border-box; text-align: center; line-height: 10px; white-space: nowrap; border-right: 1px solid #b9bdc8; }
        .num { width: 49px; font-size: 8px; }
        .unit { width: 51px; }
        .layer { display: flex; align-items: center; width: 94px; padding-left: 1px; }
        .layer i { width: 8px; height: 8px; background: #000; }
        .w4 { width: 35px; }
        .w2 { width: 21px; }
        .w3 { width: 27px; }
        .w6 { width: 49px; }
        .on { font-weight: bold; color: #000; background: #dcebf5; }
        .tol { border: 0; padding-left: 3px; }
      </style>
      <button class="w4">工作平面</button><span class="num">x 1107.897</span><span class="num">y 1535.771</span>
      <span class="num">z 0.000</span><button class="unit">毫米</button>
      <button class="layer"><i></i>默认</button>
      <button class="w4">锁定格点</button><button class="w2">正交</button><button class="w4 on">平面模式</button>
      <button class="w4 on">物件锁点</button><button class="w4">智慧轨迹</button><button class="w3 on">操作轴</button>
      <button class="w6 on">记录建构历史</button><button class="w3">过滤器</button><span class="tol">绝对公差: 0.01</span>`);
  }
}
customElements.define("status-bar", StatusBar);
</script>
</body>
</html>
